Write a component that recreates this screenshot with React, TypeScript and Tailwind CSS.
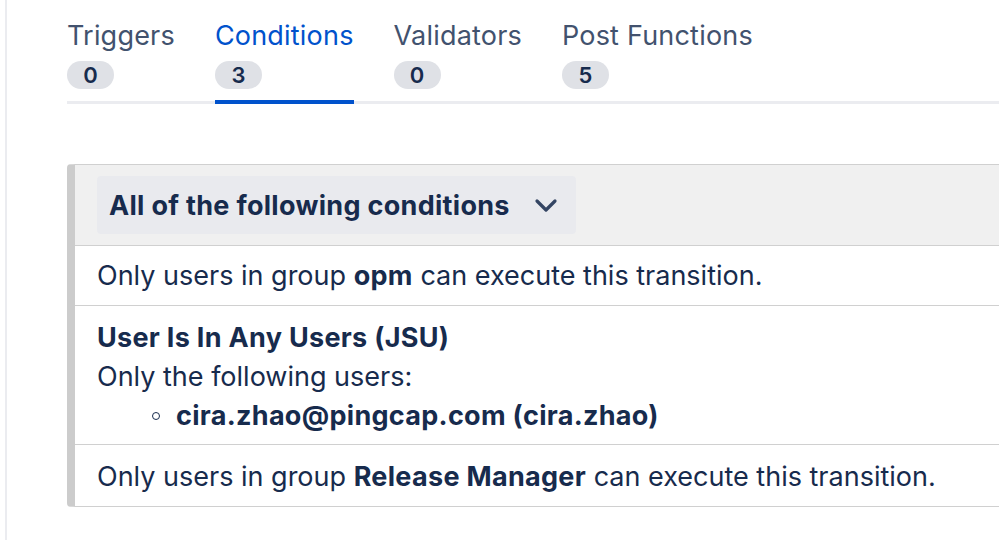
import React from 'react';

const tabs = [
  { label: 'Triggers', count: 0 },
  { label: 'Conditions', count: 3, active: true },
  { label: 'Validators', count: 0 },
  { label: 'Post Functions', count: 5 },
];

const App = () => {
  return (
    <div
      className="w-[999px] h-[540px] bg-white flex overflow-hidden text-[#172b4d]"
      style={{ fontFamily: 'Inter, "Noto Sans", sans-serif' }}
    >
      {/* left edge line */}
      <div className="w-[5px] shrink-0" />
      <div className="w-[2px] shrink-0 bg-[#ebecf0]" />

      <div className="flex-1 pl-[60px] pt-[19px] min-w-0">
        {/* Tabs */}
        <div className="flex gap-[40px] border-b-[3px] border-[#ebecf0]">
          {tabs.map((t) => (
            <div
              key={t.label}
              className={`flex flex-col items-start pb-[11px] -mb-[3px] border-b-[4px] ${
                t.active ? 'border-[#0052cc]' : 'border-transparent'
              }`}
            >
              <span
                className={`text-[27px] leading-[34px] tracking-[0.2px] ${
                  t.active ? 'text-[#0052cc]' : 'text-[#42526e]'
                }`}
              >
                {t.label}
              </span>
              <span className="mt-[8px] h-[28px] w-[47px] rounded-full bg-[#dfe1e6] text-[#172b4d] text-[22px] font-semibold leading-[28px] text-center">
                {t.count}
              </span>
            </div>
          ))}
        </div>

        {/* Conditions panel */}
        <div className="mt-[60px] border border-r-0 border-[#d0d0d0] border-l-[8px] border-l-[#cccccc] rounded-l-[4px] text-[27px] leading-[39px]">
          <div className="bg-[#f0f0f0] border-b border-[#d0d0d0] pl-[22px] py-[11px]">
            <button className="flex items-center gap-[24px] bg-[#e9eaee] rounded-[4px] h-[58px] pl-[12px] pr-[18px] font-bold tracking-[0.3px] text-[#172b4d]">
              All of the following conditions
              <svg width="24" height="16" viewBox="0 0 24 16" fill="none">
                <path
                  d="M3 4l9 9 9-9"
                  stroke="#344563"
                  strokeWidth="3.2"
                  strokeLinecap="round"
                  strokeLinejoin="round"
                />
              </svg>
            </button>
          </div>

          <div className="pl-[22px] py-[10px] border-b border-[#d0d0d0]">
            Only users in group <b className="tracking-[0.3px]">opm</b> can execute this transition.
          </div>

          <div className="pl-[22px] pt-[12px] pb-[9px] border-b border-[#d0d0d0]">
            <div className="font-bold tracking-[0.3px]">User Is In Any Users (JSU)</div>
            <div>Only the following users:</div>
            <ul className="pl-[55px]">
              <li className="flex items-center gap-[16px]">
                <span className="w-[8px] h-[8px] rounded-full border border-[#172b4d]" />
                <b className="tracking-[0.3px]">cira.zhao@pingcap.com (cira.zhao)</b>
              </li>
            </ul>
          </div>

          <div className="pl-[22px] pt-[12px] pb-[10px]">
            Only users in group <b className="tracking-[0.3px]">Release Manager</b> can execute this transition.
          </div>
        </div>
      </div>
    </div>
  );
};

export default App;
